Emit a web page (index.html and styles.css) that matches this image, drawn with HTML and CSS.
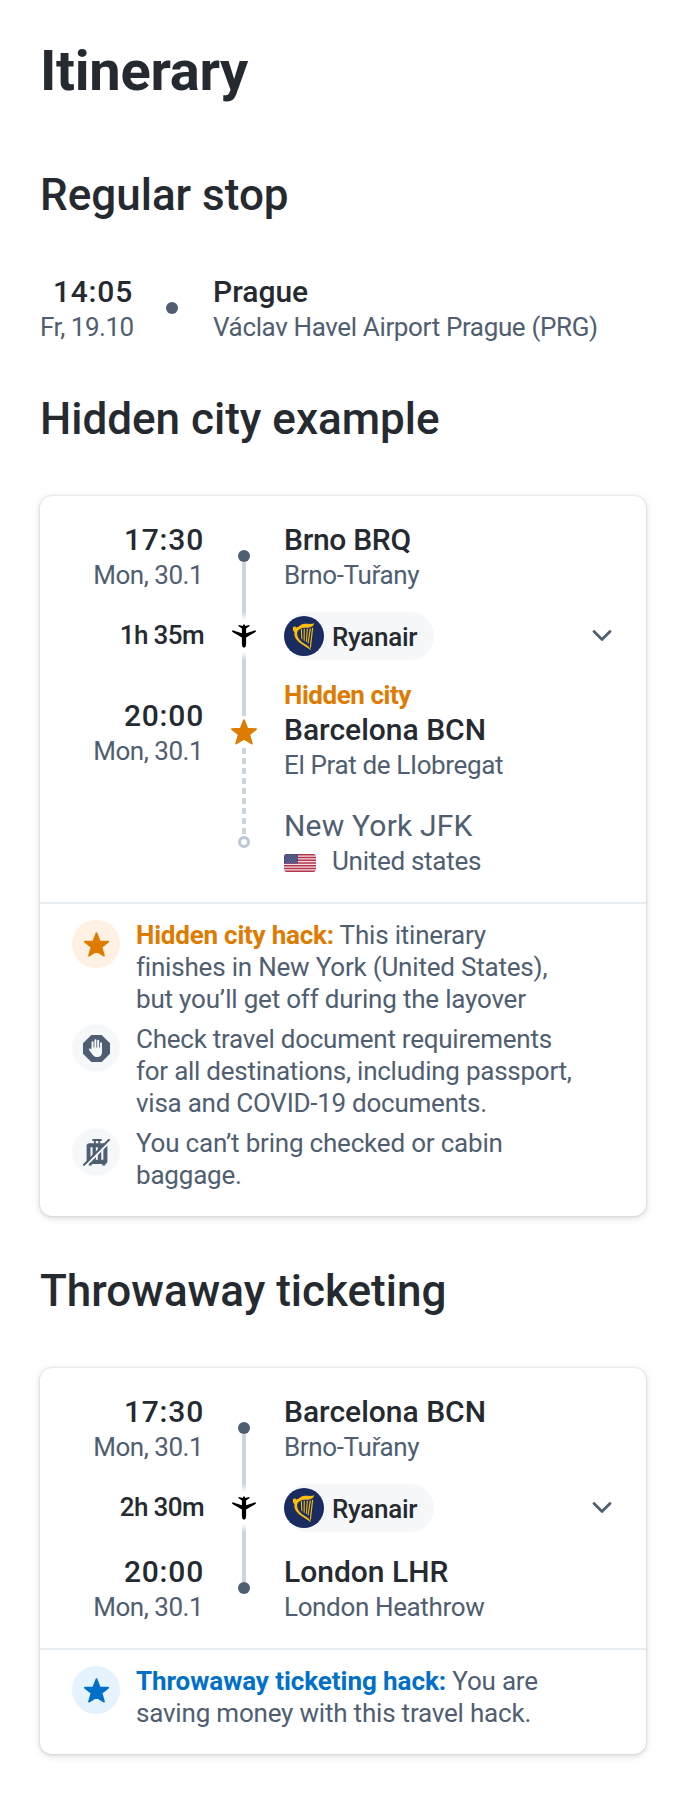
FILE: index.html
```html
<!DOCTYPE html>
<html lang="en">
<head>
<meta charset="utf-8">
<title>Itinerary</title>
<link rel="stylesheet" href="styles.css">
</head>
<body>
<svg class="defs" width="0" height="0">
  <defs>
    <symbol id="star" viewBox="0 0 28 28"><path d="M14 2.200L17.300 10.700L26.100 11.100L19.200 16.600L21.800 25.600L14 20.800L6.200 25.600L8.800 16.600L1.900 11.100L10.700 10.700Z" stroke="currentColor" stroke-width="1.800" stroke-linejoin="round" fill="currentColor"/></symbol>
    <symbol id="plane" viewBox="0 0 24 24"><path d="M12 .3c.6 0 1 .7 1.300 1.700l3.800-1c.7-.1.800.8.2 1.200l-3.200 2.300v4.700l8.500-2.800c1.500-.4 1.800 1.200.5 1.900l-9 5.200v5.500c0 2-.4 3.900-1 4.300-.6.400-1.600.4-2.200 0-.6-.4-1-2.300-1-4.300v-5.500l-9-5.200c-1.300-.7-1-2.300.5-1.900l8.500 2.800V4.500L6.700 2.200c-.6-.4-.5-1.300.2-1.200l3.800 1c.3-1 .7-1.700 1.300-1.700z"/></symbol>
    <symbol id="chevron" viewBox="0 0 20 14"><path d="M2 2.500l8 8 8-8" fill="none" stroke="currentColor" stroke-width="2.800" stroke-linecap="round" stroke-linejoin="round"/></symbol>
    <symbol id="harp" viewBox="0 0 40 40">
      <circle cx="20" cy="20" r="20" fill="#1a2b5f"/>
      <g fill="#f9bc0c"><path d="M9 11.500c.5-1.300 2.500-1.300 3.600-.1 2.900-.4 4-3.400 8-3.600 3.400-.2 6.700.7 9.700-.6-.8 3-4 4.700-8.100 4.500-3.800-.2-7.500.8-8.900 4.300-.8 4.300 2 8.600 6 11 3.500 2 6.500 3.800 8 7.200-3.500-2.200-7-4.300-10.500-6.800-4.700-3.300-7.300-7.200-6.300-11.400-1.300-.7-2-2.500-1.500-4.500z"/>
      <path d="M16.800 13h1.100l.5 10.500-1.100-1zM19.700 12.700h1.100l-.1 12.500-1.100-.9zM22.800 12.700h1.100l-1 13.500-1-.8zM25.700 12.500h1.200l-2.300 15-1-.6zM28 11.800h1.200l-2.300 20.500-1-1.500z"/></g>
    </symbol>
  </defs>
</svg>
<main class="page">
  <h1 class="title">Itinerary</h1>

  <h2 class="heading">Regular stop</h2>
  <div class="single-stop">
    <div class="when"><div class="main">14:05</div><div class="sub">Fr, 19.10</div></div>
    <span class="dot"></span>
    <div class="place"><div class="main">Prague</div><div class="sub">Václav Havel Airport Prague (PRG)</div></div>
  </div>

  <h2 class="heading">Hidden city example</h2>
  <section class="card">
    <div class="route">
      <div class="row stop">
        <div class="when"><div class="main">17:30</div><div class="sub">Mon, 30.1</div></div>
        <div class="rail rail-start"><span class="dot"></span><span class="line"></span></div>
        <div class="place"><div class="main tight">Brno BRQ</div><div class="sub">Brno-Tuřany</div></div>
      </div>
      <div class="row segment">
        <div class="when duration">1h 35m</div>
        <div class="rail"><span class="fade-out"></span><svg class="plane"><use href="#plane"/></svg><span class="fade-in"></span></div>
        <div class="carrier-row">
          <div class="carrier"><svg class="logo"><use href="#harp"/></svg><span class="carrier-name">Ryanair</span></div>
          <svg class="chevron"><use href="#chevron"/></svg>
        </div>
      </div>
      <div class="row hidden-stop">
        <div class="when"><div class="main">20:00</div><div class="sub">Mon, 30.1</div></div>
        <div class="rail"><span class="line-to-star"></span><svg class="star"><use href="#star"/></svg><span class="dashes"></span></div>
        <div class="place"><div class="flagged">Hidden city</div><div class="main">Barcelona BCN</div><div class="sub">El Prat de LIobregat</div></div>
      </div>
      <div class="row">
        <div class="when"></div>
        <div class="rail"><span class="dashes dashes-end"></span><span class="ring"></span></div>
        <div class="place"><div class="main muted">New York JFK</div>
          <div class="sub country">
            <svg class="flag" viewBox="0 0 32 18"><rect width="32" height="18" fill="#f3dfe4"/><path d="M0 .7h32M0 3.470h32M0 6.240h32M0 9.010h32M0 11.780h32M0 14.550h32M0 17.320h32" stroke="#b8354c" stroke-width="1.400"/><rect width="14" height="9.500" fill="#484a7c"/><path d="M1.500 2h12M2.500 4h11M1.500 6h12M2.500 8h11" stroke="#9a9bbb" stroke-width=".8" stroke-dasharray="1 1.300"/></svg>
            <span>United states</span>
          </div>
        </div>
      </div>
    </div>
    <ul class="notes">
      <li class="note"><span class="badge orange"><svg class="icon"><use href="#star"/></svg></span>
        <p class="text"><strong class="orange-text">Hidden city hack:</strong> This itinerary finishes in New York (United States), but you’ll get off during the layover</p></li>
      <li class="note"><span class="badge">
        <svg class="icon" viewBox="0 0 26 26"><path d="M8 0h10l8 8v10l-8 8H8l-8-8V8z" fill="#4f5e71"/><path d="M9.200 14.500V7M11.900 13V5M14.600 13V5.600M17.300 14V8" stroke="#f5f7f9" stroke-width="1.900" stroke-linecap="round"/><path d="M8.200 12h10.100v4.500c0 3-1.600 4.700-4.500 4.700-2.500 0-3.600-.9-4.900-2.700L5.700 14.200c-.3-.9.700-1.600 1.500-1l1.200 1z" fill="#f5f7f9"/></svg></span>
        <p class="text text-documents">Check travel document requirements for all destinations, including passport, visa and COVID-19 documents.</p></li>
      <li class="note"><span class="badge">
        <svg class="icon" viewBox="0 0 26 26"><path d="M9 0h9v2h-1.500v2H21c1.500 0 2.500 1 2.500 2.500v15c0 1.300-.8 2.300-2 2.500v1.500h-3V24h-10v1.500h-3V24c-1.200-.2-2-1.200-2-2.500v-15C3.500 5 4.500 4 6 4h4.500V2H9z" fill="#4f5e71"/><path d="M12.300 2h2.400v2h-2.400zM7.200 8h2v12h-2zM12.400 8h1.900v12h-1.900zM17.600 8h2v12h-2z" fill="#f5f7f9"/><path d="M1.500 26.800L26.800 1.600" stroke="#f5f7f9" stroke-width="2"/><path d="M1 24.700L25 .8" stroke="#4f5e71" stroke-width="2" stroke-linecap="round"/></svg></span>
        <p class="text">You can’t bring checked or cabin baggage.</p></li>
    </ul>
  </section>

  <h2 class="heading">Throwaway ticketing</h2>
  <section class="card">
    <div class="route">
      <div class="row stop">
        <div class="when"><div class="main">17:30</div><div class="sub">Mon, 30.1</div></div>
        <div class="rail rail-start"><span class="dot"></span><span class="line"></span></div>
        <div class="place"><div class="main">Barcelona BCN</div><div class="sub">Brno-Tuřany</div></div>
      </div>
      <div class="row segment">
        <div class="when duration">2h 30m</div>
        <div class="rail"><span class="fade-out"></span><svg class="plane"><use href="#plane"/></svg><span class="fade-in"></span></div>
        <div class="carrier-row">
          <div class="carrier"><svg class="logo"><use href="#harp"/></svg><span class="carrier-name">Ryanair</span></div>
          <svg class="chevron"><use href="#chevron"/></svg>
        </div>
      </div>
      <div class="row final-stop">
        <div class="when"><div class="main">20:00</div><div class="sub">Mon, 30.1</div></div>
        <div class="rail"><span class="line-to-end"></span><span class="dot"></span></div>
        <div class="place"><div class="main">London LHR</div><div class="sub">London Heathrow</div></div>
      </div>
    </div>
    <ul class="notes">
      <li class="note"><span class="badge blue"><svg class="icon"><use href="#star"/></svg></span>
        <p class="text"><strong class="blue-text">Throwaway ticketing hack:</strong> You are saving money with this travel hack.</p></li>
    </ul>
  </section>
</main>
</body>
</html>
```

FILE: styles.css
```css
* { box-sizing: border-box; }
body { margin: 0; background: #fff; color: #252a31; font-family: Roboto, "Liberation Sans", sans-serif; }
.defs { display: block; }
.page { padding: 39px 40px 40px; }

.title { margin: 0; font-size: 56px; line-height: 64px; font-weight: 700; letter-spacing: -.28px; }
.heading { margin: 0; font-size: 44px; line-height: 52px; font-weight: 500; }
.title + .heading { margin-top: 66px; }
.single-stop + .heading { margin-top: 49px; }
.card + .heading { margin-top: 49px; }

.main { font-size: 30px; line-height: 36px; font-weight: 500; white-space: nowrap; }
.main.tight { letter-spacing: -.3px; }
.main.muted { color: #4f5e71; font-weight: 400; letter-spacing: .2px; }
.sub { font-size: 26px; line-height: 34px; color: #4f5e71; white-space: nowrap; letter-spacing: -.36px; }
.when { text-align: right; }
.when .main { letter-spacing: .8px; }
.when .sub { letter-spacing: -.5px; padding-right: 1px; }

.dot { display: block; width: 12px; height: 12px; border-radius: 50%; background: #4f5e71; flex: none; }

.single-stop { display: flex; align-items: flex-start; margin-top: 53px; }
.single-stop .when { width: 93px; }
.single-stop .dot { margin: 28px 35px 0 33px; }

.card { margin-top: 51px; border-radius: 12px; background: #fff; box-shadow: 0 0 2px rgba(37, 42, 49, .16), 0 2px 8px rgba(37, 42, 49, .12), 0 1px 4px rgba(37, 42, 49, .1); }
.route { padding: 26px 32px 24px 0; }
.row { display: grid; grid-template-columns: 164px 80px 1fr; }
.stop { min-height: 90px; }
.rail { display: flex; flex-direction: column; align-items: center; }
.rail-start { padding-top: 28px; }
.line { flex: 1; width: 4px; background: #cbd5e0; }
.segment { height: 48px; }
.duration { font-size: 26px; line-height: 46px; font-weight: 500; letter-spacing: -.6px; }
.fade-out, .fade-in { width: 4px; height: 8px; flex: none; }
.fade-out { background: linear-gradient(#cbd5e0, #fff); }
.fade-in { background: linear-gradient(#fff, #cbd5e0); }
.plane { width: 24px; height: 24px; margin: 4px 0; flex: none; }
.carrier-row { display: flex; align-items: center; justify-content: space-between; padding-right: 2px; }
.carrier { display: flex; align-items: center; gap: 8px; height: 48px; width: 150px; border-radius: 24px; background: #f5f7f9; font-size: 26px; font-weight: 500; letter-spacing: -.3px; }
.carrier-name { padding-top: 2px; }
.logo { width: 40px; height: 40px; flex: none; }
.chevron { width: 20px; height: 14px; color: #4f5e71; }

.hidden-stop { height: 148px; }
.hidden-stop > .when { padding-top: 38px; }
.hidden-stop > .place { padding-top: 18px; }
.flagged { font-size: 26px; line-height: 34px; font-weight: 700; color: #df7b00; letter-spacing: -.45px; }
.line-to-star { width: 4px; height: 56px; background: #cbd5e0; }
.star { width: 28px; height: 28px; margin: 2px 0; color: #df7b00; flex: none; }
.dashes { flex: 1; width: 4px; background: repeating-linear-gradient(#cbd5e0 0 6.500px, transparent 6.500px 10px); }
.dashes-end { flex: none; height: 28px; }
.ring { width: 12px; height: 12px; border: 3px solid #bac7d5; border-radius: 50%; }
.country { display: flex; align-items: center; gap: 16px; letter-spacing: -.28px; }
.flag { width: 32px; height: 18px; border-radius: 3px; margin-top: 4px; }

.final-stop > .when, .final-stop > .place { padding-top: 22px; }
.line-to-end { width: 4px; height: 50px; background: #cbd5e0; }

.notes { list-style: none; margin: 0; padding: 16px 32px 24px; border-top: 2px solid #e8edf1; display: grid; gap: 8px; }
.note { display: flex; gap: 16px; align-items: flex-start; }
.badge { display: grid; place-items: center; width: 48px; height: 48px; border-radius: 50%; background: #f5f7f9; flex: none; }
.icon { width: 27px; height: 27px; }
.badge.orange { background: #fef0e2; color: #df7b00; }
.badge.blue { background: #e5f3ff; color: #0070c9; }
.text { margin: -1px 0 1px; width: 440px; font-size: 26px; line-height: 32px; color: #4f5e71; letter-spacing: -.2px; }
.text-documents { letter-spacing: -.25px; }
.orange-text { color: #df7b00; letter-spacing: -.22px; }
.blue-text { color: #0070c9; letter-spacing: -.06px; }
```
